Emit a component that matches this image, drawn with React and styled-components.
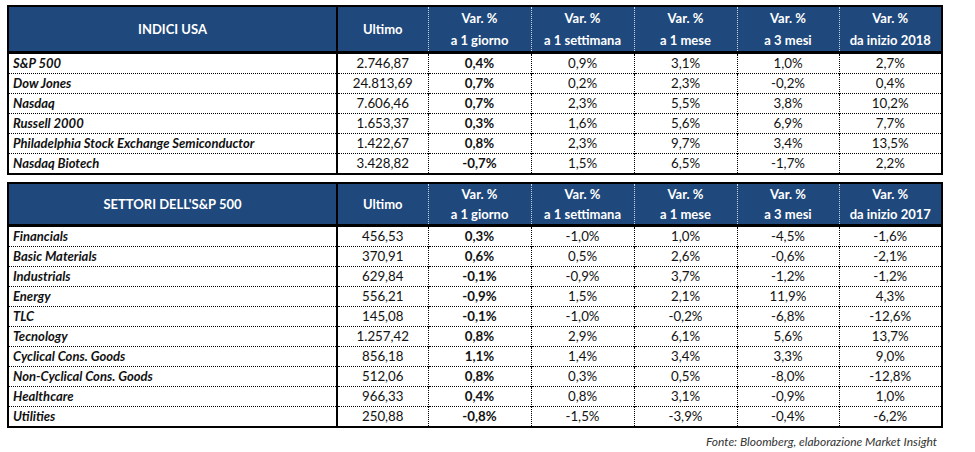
import React from 'react'
import styled, { createGlobalStyle } from 'styled-components'

const GlobalStyle = createGlobalStyle`
  body {
    margin: 0;
    background: #fff;
    font-family: Lato, "Liberation Sans", sans-serif;
  }
`

const indici = [
  ['S&P 500', '2.746,87', '0,4%', '0,9%', '3,1%', '1,0%', '2,7%'],
  ['Dow Jones', '24.813,69', '0,7%', '0,2%', '2,3%', '-0,2%', '0,4%'],
  ['Nasdaq', '7.606,46', '0,7%', '2,3%', '5,5%', '3,8%', '10,2%'],
  ['Russell 2000', '1.653,37', '0,3%', '1,6%', '5,6%', '6,9%', '7,7%'],
  ['Philadelphia Stock Exchange Semiconductor', '1.422,67', '0,8%', '2,3%', '9,7%', '3,4%', '13,5%'],
  ['Nasdaq Biotech', '3.428,82', '-0,7%', '1,5%', '6,5%', '-1,7%', '2,2%'],
]

const settori = [
  ['Financials', '456,53', '0,3%', '-1,0%', '1,0%', '-4,5%', '-1,6%'],
  ['Basic Materials', '370,91', '0,6%', '0,5%', '2,6%', '-0,6%', '-2,1%'],
  ['Industrials', '629,84', '-0,1%', '-0,9%', '3,7%', '-1,2%', '-1,2%'],
  ['Energy', '556,21', '-0,9%', '1,5%', '2,1%', '11,9%', '4,3%'],
  ['TLC', '145,08', '-0,1%', '-1,0%', '-0,2%', '-6,8%', '-12,6%'],
  ['Tecnology', '1.257,42', '0,8%', '2,9%', '6,1%', '5,6%', '13,7%'],
  ['Cyclical Cons. Goods', '856,18', '1,1%', '1,4%', '3,4%', '3,3%', '9,0%'],
  ['Non-Cyclical Cons. Goods', '512,06', '0,8%', '0,3%', '0,5%', '-8,0%', '-12,8%'],
  ['Healthcare', '966,33', '0,4%', '0,8%', '3,1%', '-0,9%', '1,0%'],
  ['Utilities', '250,88', '-0,8%', '-1,5%', '-3,9%', '-0,4%', '-6,2%'],
]

const widths = [329, 91, 103, 103, 103, 102, 103]

const Page = styled.div`
  padding: 5px 0 0 7px;
  width: 936px;
  display: flex;
  flex-direction: column;
  gap: 7px;
`

const Table = styled.table`
  width: 936px;
  table-layout: fixed;
  border-collapse: collapse;
  border: 2px solid #000;
  color: #111;
`

const HeadRow = styled.tr`
  height: ${p => p.$h}px;
`

const Th = styled.th`
  background: #1f497d;
  color: #fff;
  font-weight: 700;
  font-size: 13px;
  line-height: ${p => p.$lh}px;
  text-align: center;
  padding: 0;
  border-bottom: 3px solid #000;
  border-left: 1px dotted #c9d3e2;

  &:first-child {
    border-left: none;
  }
  &:nth-child(2) {
    border-left: 2px solid #000;
  }
`

const Row = styled.tr`
  height: 20px;
`

const Td = styled.td`
  font-size: 13.3px;
  line-height: 19px;
  padding: 0;
  text-align: center;
  white-space: nowrap;
  border-top: 1px dotted #000;
  border-left: 1px dotted #000;

  &:first-child {
    text-align: left;
    padding-left: 4px;
    font-size: 13px;
    font-weight: 700;
    font-style: italic;
    border-left: none;
  }
  &:nth-child(2) {
    border-left: 2px solid #000;
  }
  &:nth-child(3) {
    font-weight: 700;
  }
`

const Fonte = styled.div`
  width: 930px;
  text-align: right;
  font-size: 12px;
  font-style: italic;
  color: #333;
  margin-top: -1px;
`

function DataTable({ title, year, rows, headH, lineH }) {
  const heads = ['a 1 giorno', 'a 1 settimana', 'a 1 mese', 'a 3 mesi', `da inizio ${year}`]
  return (
    <Table>
      <colgroup>
        {widths.map((w, i) => <col key={i} style={{ width: w }} />)}
      </colgroup>
      <thead>
        <HeadRow $h={headH}>
          <Th $lh={lineH}>{title}</Th>
          <Th $lh={lineH}>Ultimo</Th>
          {heads.map(h => (
            <Th key={h} $lh={lineH}>Var. %<br />{h}</Th>
          ))}
        </HeadRow>
      </thead>
      <tbody>
        {rows.map(r => (
          <Row key={r[0]}>
            {r.map((c, i) => <Td key={i}>{c}</Td>)}
          </Row>
        ))}
      </tbody>
    </Table>
  )
}

export default function App() {
  return (
    <>
      <GlobalStyle />
      <Page>
        <DataTable title="INDICI USA" year="2018" rows={indici} headH={42} lineH={22} />
        <DataTable title="SETTORI DELL'S&P 500" year="2017" rows={settori} headH={39} lineH={20} />
        <Fonte>Fonte: Bloomberg, elaborazione Market Insight</Fonte>
      </Page>
    </>
  )
}
